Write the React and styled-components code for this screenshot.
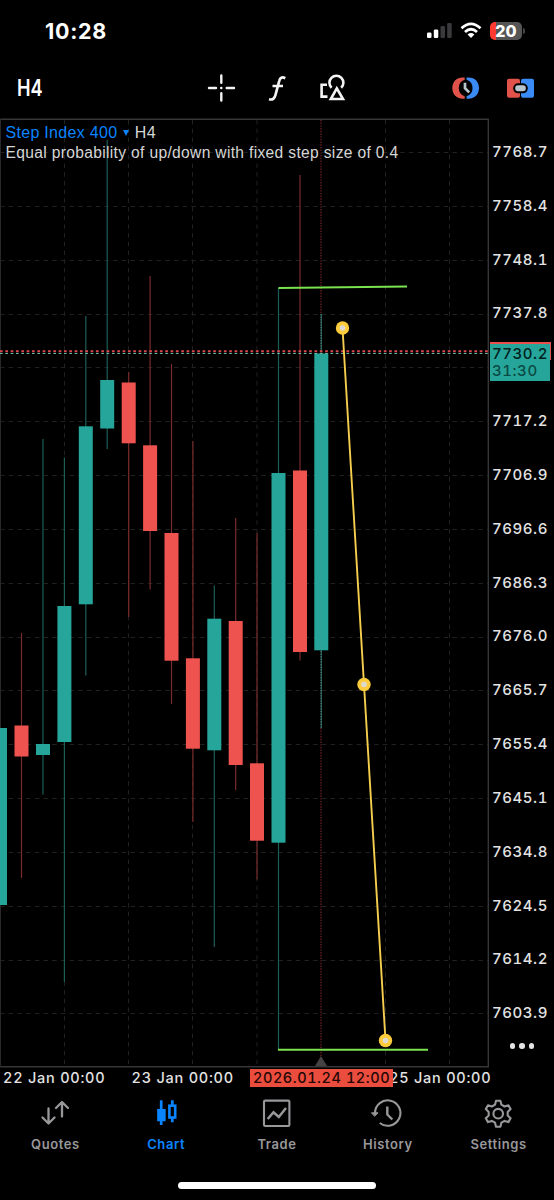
import React from 'react'
import styled, { createGlobalStyle, css } from 'styled-components'

const UP = '#26a69a'
const DOWN = '#ef5350'
const UP_WICK = '#1c5f57'
const DOWN_WICK = '#7a2c2b'
const CHART_TOP = 119
const STEP = 53.84

const GlobalStyle = createGlobalStyle`
  body {
    margin: 0;
    background: #000;
  }
  * {
    box-sizing: border-box;
  }
`

const Screen = styled.div`
  width: 554px;
  height: 1200px;
  display: flex;
  flex-direction: column;
  overflow: hidden;
  background: #000;
  color: #fff;
  font-family: Inter, 'Liberation Sans', sans-serif;
`

const StatusBar = styled.header`
  height: 60px;
  padding: 1px 32px 0 45px;
  display: flex;
  align-items: center;
  justify-content: space-between;
`

const Clock = styled.span`
  font-size: 21.5px;
  font-weight: 700;
  letter-spacing: 0.7px;
`

const StatusIcons = styled.div`
  display: flex;
  align-items: center;
  gap: 8px;
`

const Battery = styled.div`
  position: relative;
  width: 32px;
  height: 18px;
  border-radius: 5px;
  background: linear-gradient(90deg, #ff3a30 6px, #555 6px);
  color: #fff;
  font-size: 16px;
  font-weight: 800;
  line-height: 18px;
  text-align: center;

  &::after {
    content: '';
    position: absolute;
    right: -3px;
    top: 6px;
    width: 2px;
    height: 6px;
    border-radius: 0 2px 2px 0;
    background: #444;
  }
`

const Toolbar = styled.nav`
  height: 58px;
  padding: 0 19px 2px 17px;
  display: grid;
  grid-template-columns: 191px 55px 56px 133px 55px 28px;
  align-items: center;
`

const Timeframe = styled.span`
  font-size: 23px;
  font-weight: 600;
  transform: translateY(-0.5px) scaleX(0.79);
  transform-origin: left;
`

const ToolIcon = styled.svg`
  display: block;
  width: 28px;
  height: 28px;
  overflow: visible;
`

const ChartArea = styled.main`
  position: relative;
  height: 950px;
  display: grid;
  grid-template-columns: 489px 1fr;
`

const Plot = styled.svg`
  display: block;
  width: 489px;
  height: 950px;
`

const ChartTitle = styled.div`
  position: absolute;
  left: 5.5px;
  top: 5px;
  font-family: 'Liberation Sans', Arial, sans-serif;
  font-size: 16px;
  line-height: 20px;
  letter-spacing: 0.3px;
  color: #d6d6d6;
  white-space: nowrap;
`

const SymbolName = styled.span`
  color: #0a84ff;
`

const Caret = styled.span`
  display: inline-block;
  margin: 0 6px 2px 5.5px;
  border: 3.5px solid transparent;
  border-top: 6px solid #0a84ff;
  border-bottom: 0;
`

const Description = styled.div`
  font-size: 15.6px;
  letter-spacing: 0.33px;
`

const PriceAxis = styled.div`
  padding: 7px 0 0 3px;
  display: flex;
  flex-direction: column;
`

const axisText = css`
  font-size: 15px;
  font-weight: 500;
  font-variant-numeric: tabular-nums;
  letter-spacing: 0.55px;
  white-space: nowrap;
  color: #e3e3e3;
`

const Price = styled.span`
  ${axisText}
  height: ${STEP}px;
  flex: none;
  line-height: ${STEP}px;
`

const AskTag = styled.div`
  position: absolute;
  left: 490px;
  top: 224px;
  width: 61px;
  height: 18px;
  background: #e94f4c;
`

const BidTag = styled.div`
  ${axisText}
  position: absolute;
  left: 490px;
  top: 226px;
  width: 60px;
  height: 37px;
  padding: 0 2px;
  background: ${UP};
  color: #00201c;
  line-height: 19px;
`

const Countdown = styled.div`
  color: #0b4b45;
  line-height: 16px;
`

const More = styled.div`
  position: absolute;
  left: 509.5px;
  top: 925px;
  display: flex;
  gap: 4px;
`

const Dot = styled.i`
  width: 5.5px;
  height: 5.5px;
  border-radius: 50%;
  background: #e4e4e4;
`

const TimeAxis = styled.div`
  position: relative;
  height: 21px;
  padding-left: 3px;
  display: grid;
  grid-template-columns: 128.5px 257.5px 1fr;
`

const TimeLabel = styled.span`
  ${axisText}
  font-size: 14.5px;
  letter-spacing: 0.75px;
  line-height: 19px;
`

const TimeMarker = styled.span`
  ${axisText}
  position: absolute;
  left: 250px;
  top: 1px;
  width: 143px;
  height: 18px;
  padding-left: 3px;
  background: #ea4d3d;
  color: #240704;
  font-size: 14.5px;
  line-height: 17px;
`

const TabBar = styled.nav`
  height: 78px;
  display: grid;
  grid-template-columns: repeat(5, 1fr);
`

const Tab = styled.a`
  padding-top: 10px;
  display: flex;
  flex-direction: column;
  align-items: center;
  gap: 7px;
  color: ${p => (p.$active ? '#0a84ff' : '#98989b')};
  font-size: 13px;
  font-weight: 600;
  letter-spacing: 0.6px;

  svg {
    width: 30px;
    height: 30px;
    fill: none;
    stroke: currentColor;
    stroke-width: 2.1;
    stroke-linecap: round;
    stroke-linejoin: round;
    overflow: visible;
  }
`

const HomeIndicator = styled.div`
  width: 198px;
  height: 7px;
  margin: 14.5px auto 0;
  border-radius: 4px;
  background: #fff;
`

// [x, high, open/close top, open/close bottom, low, rising]
const candles = [
  [0, 728, 728, 905, 905, true],
  [21.5, 633, 725.5, 756.5, 878, false],
  [43, 439, 744, 755, 794.5, true],
  [64.4, 457.5, 606, 742, 982, true],
  [85.8, 316, 426.3, 604.3, 675.5, true],
  [107.2, 140, 380, 428.5, 449, true],
  [128.7, 372, 382.5, 443.3, 617, false],
  [150.1, 276, 445.3, 531, 589.5, false],
  [171.5, 364, 533, 660.7, 704, false],
  [192.9, 441, 658.3, 748.7, 822, false],
  [214.3, 585.5, 618.7, 750.3, 947, true],
  [235.7, 518, 621, 765, 790, false],
  [257, 533, 763.3, 840.7, 879.5, false],
  [278.5, 288, 473, 842.7, 1050, true],
  [300, 175, 470.5, 652, 660.5, false],
  [321.3, 314, 353.5, 650.3, 728, true],
]

const prices = [
  '7768.7', '7758.4', '7748.1', '7737.8', '', '7717.2', '7706.9', '7696.6', '7686.3',
  '7676.0', '7665.7', '7655.4', '7645.1', '7634.8', '7624.5', '7614.2', '7603.9',
]

const gridX = [64.5, 128.5, 192.5, 257, 385.5, 449.5]
const handles = [[342.5, 328], [364, 684.5], [385.5, 1040.5]]

const Chart = () => (
  <Plot viewBox={`0 ${CHART_TOP - 1} 489 950`}>
    <g stroke="#1f2020" strokeDasharray="4.5 4.2">
      {gridX.map(x => <path key={x} d={`M${x} 120V1066`} />)}
      {prices.map((p, i) => {
        const y = Math.round(152 + i * STEP) + 0.5
        return <path key={y} d={`M0 ${y}H488`} />
      })}
    </g>
    <path d="M0 119.3H489M488.3 119V1067M0 1066.8H489" stroke="#363638" strokeWidth="1.4" />
    <path d="M.5 119V1067" stroke="#29292b" />
    {candles.map(([x, high, top, bottom, low, rising]) => (
      <g key={x} fill={rising ? UP : DOWN}>
        <path d={`M${x} ${high}V${low}`} stroke={rising ? UP_WICK : DOWN_WICK} strokeWidth="1.2" />
        <rect x={x - 7} y={top} width="14" height={bottom - top} />
      </g>
    ))}
    <path d="M321 120V314M321 728V1066" stroke="#9a3038" strokeWidth="1.1" strokeDasharray="1.4 1.3" opacity=".85" />
    <path d="M321 314V353M321 651V728" stroke="#8fa9a0" strokeWidth="1" strokeDasharray="1.3 1.3" opacity=".7" />
    <path d="M321 354V650" stroke="#5d8f87" strokeWidth="1" strokeDasharray="1.3 1.3" opacity=".6" />
    <path d="M0 351.2H488" stroke="#d9484c" strokeWidth="2" strokeDasharray="2.7 2.63" />
    <path d="M0 353.5H488" stroke="#65b8ae" strokeWidth="1.2" strokeDasharray="2.7 2.63" />
    <path d="M278.5 288L407 286.5M278 1049.8H428" stroke="#7be34f" strokeWidth="1.9" />
    <path d="M342.5 328L364 684.5L385.5 1040.5" fill="none" stroke="#f5ce4e" strokeWidth="1.9" />
    {handles.map(([x, y]) => (
      <g key={y}>
        <circle cx={x} cy={y} r="6.7" fill="#fbcb3c" />
        <circle cx={x} cy={y} r="2.8" fill="#ded9d0" />
      </g>
    ))}
    <path d="M315 1066L321 1056L327 1066Z" fill="#464143" />
  </Plot>
)

const Signal = () => (
  <svg width="25" height="17" viewBox="0 0 25 17">
    <rect x="0" y="10.5" width="4.5" height="5.5" rx="1.3" fill="#fff" />
    <rect x="6.8" y="7.5" width="4.5" height="8.5" rx="1.3" fill="#fff" />
    <rect x="13.5" y="4" width="4.5" height="12" rx="1.3" fill="#3a3a3c" />
    <rect x="20.2" y="1" width="4.5" height="15" rx="1.3" fill="#3a3a3c" />
  </svg>
)

const Wifi = () => (
  <svg width="22" height="17" viewBox="0 0 22 17">
    <g fill="none" stroke="#fff" strokeWidth="2.8">
      <path d="M1.5 6.2Q11-2.4 20.5 6.2" />
      <path d="M5 10Q11 4.5 17 10" />
    </g>
    <path d="M7.6 12.4Q11 9.6 14.4 12.4L11 16Z" fill="#fff" />
  </svg>
)

const tabs = [
  {
    name: 'Quotes',
    icon: <path d="M8.5 9.5V24M2.5 18.5L8.5 24.5L14.5 18.5M22 17.5V3.5M16 9L22 3L28 9" strokeWidth="2.3" />,
  },
  {
    name: 'Chart',
    icon: (
      <g strokeLinecap="butt" strokeLinejoin="miter">
        <path d="M10.2 1.3V26" strokeWidth="2.7" />
        <rect x="7.2" y="11" width="6.4" height="10.2" fill="currentColor" />
        <path d="M21.3 1.3V6.5M21.3 18.5V23.3" strokeWidth="2.7" />
        <rect x="18.4" y="6.7" width="5.8" height="11.8" strokeWidth="2.6" />
      </g>
    ),
  },
  {
    name: 'Trade',
    icon: (
      <g>
        <rect x="2" y="1.6" width="25.4" height="25.4" rx="1.2" />
        <path d="M5.7 20L11.5 13.2L16.8 18L24 9" strokeLinecap="butt" strokeLinejoin="miter" strokeWidth="2.5" />
      </g>
    ),
  },
  {
    name: 'History',
    icon: (
      <g transform="translate(-1.2 0)">
        <path d="M3.2 14A12.7 12.7 0 1 1 8 24" strokeLinecap="butt" />
        <path d="M0 13.8H6.3L3 17Z" fill="currentColor" strokeWidth="1" />
        <path d="M15.5 7.5V15.5L20.5 20.5" strokeLinecap="butt" strokeWidth="2.4" />
      </g>
    ),
  },
  {
    name: 'Settings',
    icon: (
      <g transform="translate(-.8 -.3)">
        <path d="M12.8 2H17.2L18.2 6L21.3 7.8L25.2 6.6L27.4 10.4L24.5 13.2V16.8L27.4 19.6L25.2 23.4L21.3 22.2L18.2 24L17.2 28H12.8L11.8 24L8.7 22.2L4.8 23.4L2.6 19.6L5.5 16.8V13.2L2.6 10.4L4.8 6.6L8.7 7.8L11.8 6Z" />
        <circle cx="15" cy="15" r="4.8" />
      </g>
    ),
  },
]

export default function App() {
  return (
    <Screen>
      <GlobalStyle />
      <StatusBar>
        <Clock>10:28</Clock>
        <StatusIcons>
          <Signal />
          <Wifi />
          <Battery>20</Battery>
        </StatusIcons>
      </StatusBar>

      <Toolbar>
        <Timeframe>H4</Timeframe>
        <ToolIcon viewBox="0 0 28 28" stroke="#f4f4f4" strokeWidth="2.4" strokeLinecap="round">
          <path d="M13.3 1.5V8.8M13.3 19.2V26.5M1 14H8M18.7 14H26M13.2 14H13.4" />
        </ToolIcon>
        <ToolIcon viewBox="0 0 28 28" fill="none" stroke="#f4f4f4" strokeWidth="2.7">
          <path d="M22.3 4.2C19 2.6 17 3.6 16.2 7L12.6 20.5C11.6 24.8 9.5 26.2 6 25.2M9.5 12H20" />
        </ToolIcon>
        <ToolIcon viewBox="0 0 28 28" fill="none" stroke="#f4f4f4" strokeWidth="2.6">
          <path d="M8 10.8H2.6V22.6H8.5" />
          <path d="M12.6 13.8A7 7 0 1 1 22.2 13.8" />
          <path d="M17.8 14.3L11.8 25H24Z" />
        </ToolIcon>
        <ToolIcon viewBox="0 0 28 28">
          <path d="M12.7 3.5H11C4 3.5.3 8.3.3 14S4 24.7 11 24.7H12.7V22.3A8.7 8.7 0 0 1 12.7 5.8Z" fill="#e0524a" />
          <path d="M14.6 3.5H16.3C23.3 3.5 27 8.3 27 14S23.3 24.7 16.3 24.7H14.6V22.3A8.7 8.7 0 0 0 14.6 5.8Z" fill="#3a8bf5" />
          <path d="M13 8.7V14.2L17.2 18.4" fill="none" stroke="#b9c4cc" strokeWidth="2.7" />
        </ToolIcon>
        <ToolIcon viewBox="0 0 28 28">
          <rect x="0" y="4.8" width="13" height="19" rx="2" fill="#e0524a" />
          <rect x="14" y="4.8" width="13" height="19" rx="2" fill="#3a8bf5" />
          <rect x="7.2" y="10.3" width="12.6" height="8" rx="3.8" fill="#b9c4cc" stroke="#000" strokeWidth="2" />
        </ToolIcon>
      </Toolbar>

      <ChartArea>
        <Chart />
        <PriceAxis>
          {prices.map((p, i) => <Price key={i}>{p}</Price>)}
        </PriceAxis>
        <ChartTitle>
          <SymbolName>Step Index 400</SymbolName>
          <Caret />
          H4
          <Description>Equal probability of up/down with fixed step size of 0.4</Description>
        </ChartTitle>
        <AskTag />
        <BidTag>
          7730.2
          <Countdown>31:30</Countdown>
        </BidTag>
        <More><Dot /><Dot /><Dot /></More>
      </ChartArea>

      <TimeAxis>
        <TimeLabel>22 Jan 00:00</TimeLabel>
        <TimeLabel>23 Jan 00:00</TimeLabel>
        <TimeLabel>25 Jan 00:00</TimeLabel>
        <TimeMarker>2026.01.24 12:00</TimeMarker>
      </TimeAxis>

      <TabBar>
        {tabs.map(t => (
          <Tab key={t.name} $active={t.name === 'Chart'}>
            <svg viewBox="0 0 30 30">{t.icon}</svg>
            {t.name}
          </Tab>
        ))}
      </TabBar>
      <HomeIndicator />
    </Screen>
  )
}
